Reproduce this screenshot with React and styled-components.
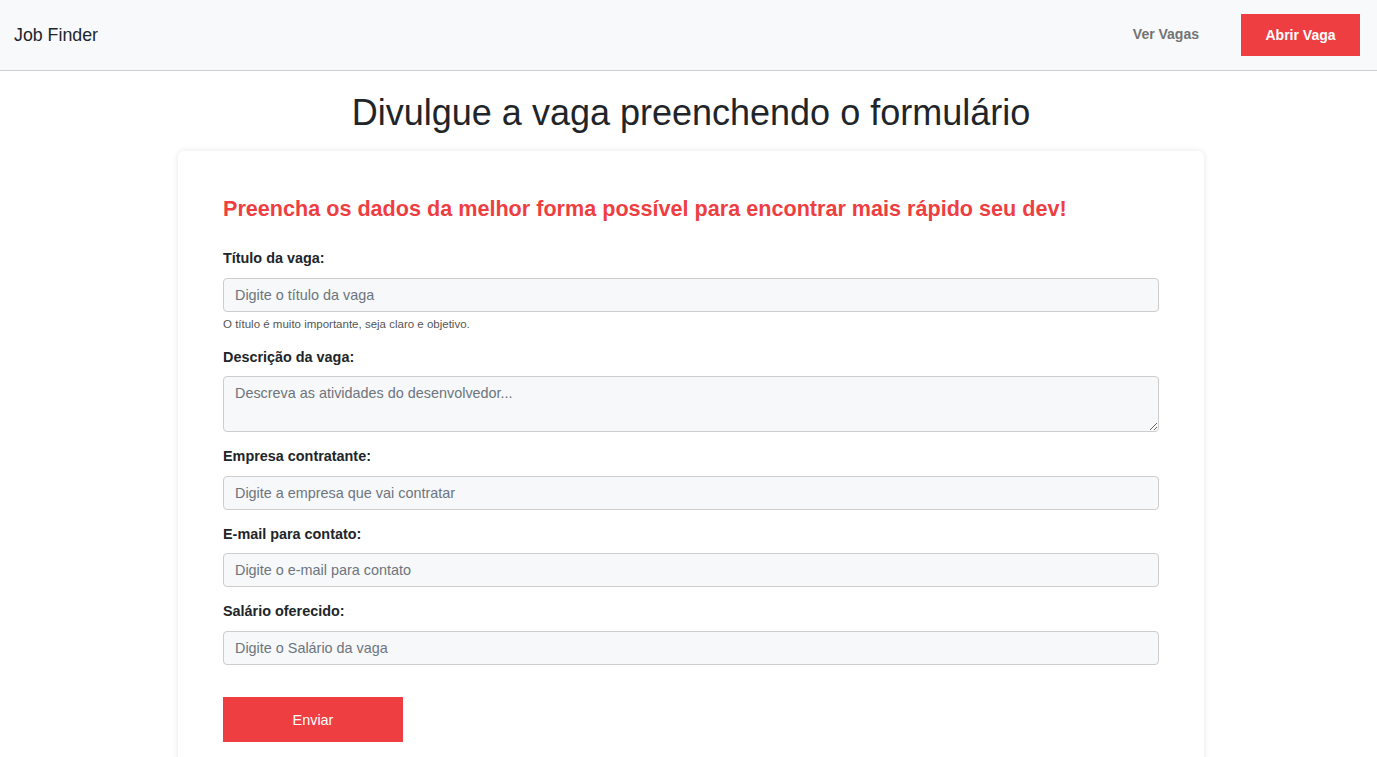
import React from "react";
import styled, { createGlobalStyle } from "styled-components";

const Global = createGlobalStyle`
  * { box-sizing: border-box; }
  html, body { margin: 0; padding: 0; background: #fff; }
  body { font-family: Arial, "Liberation Sans", Helvetica, sans-serif; color: #212529; overflow: hidden; }
`;

const Header = styled.header`
  height: 71px;
  background: #f8f9fa;
  border-bottom: 1px solid #cfcfcf;
  display: flex;
  align-items: center;
  justify-content: space-between;
  padding: 0 17px 0 14px;
`;

const Brand = styled.a`
  font-size: 17.8px;
  color: #212529;
  text-decoration: none;
`;

const Nav = styled.nav`
  display: flex;
  align-items: center;
  gap: 42px;
`;

const NavLink = styled.a`
  font-size: 14px;
  font-weight: bold;
  color: #737373;
  text-decoration: none;
  padding-bottom: 3px;
`;

const RedButton = styled.button`
  border: none;
  background: #ef3e42;
  color: #fff;
  font-family: inherit;
  font-size: ${(p) => p.$size || "14px"};
  font-weight: ${(p) => (p.$bold ? "bold" : "normal")};
  width: ${(p) => p.$w};
  height: ${(p) => p.$h};
  padding: 0;
  cursor: pointer;
`;

const Main = styled.main`
  padding-left: 5px;
`;

const Title = styled.h1`
  margin: 20px 0 17px;
  font-size: 36px;
  font-weight: normal;
  line-height: 1.2;
  text-align: center;
  color: #212529;
`;

const Card = styled.section`
  width: 1026px;
  margin: 0 auto;
  background: #fff;
  border-radius: 6px;
  box-shadow: 0 0 6px rgba(0, 0, 0, 0.1);
  padding: 45px 45px 60px;
`;

const CardHeading = styled.h2`
  margin: 0 0 26px;
  font-size: 21.6px;
  line-height: 1.2;
  font-weight: bold;
  color: #ef3e42;
`;

const Group = styled.div`
  margin-bottom: 14px;
  display: flex;
  flex-direction: column;
`;

const Label = styled.label`
  font-size: 14.4px;
  font-weight: bold;
  line-height: 21.6px;
  margin-bottom: 8px;
  color: #212529;
`;

const fieldStyles = `
  width: 936px;
  border: 1px solid #cdcdcd;
  border-radius: 4px;
  background: #f7f8fa;
  font-family: Arial, "Liberation Sans", sans-serif;
  font-size: 14.4px;
  color: #212529;
  padding: 0 11px;
  outline: none;
  &::placeholder { color: #6c757d; }
`;

const Input = styled.input`
  ${fieldStyles}
  height: 34px;
`;

const TextArea = styled.textarea`
  ${fieldStyles}
  height: 56px;
  padding-top: 6px;
  line-height: 21.6px;
  resize: vertical;
`;

const Help = styled.small`
  font-size: 11.5px;
  line-height: 17px;
  margin-top: 4px;
  color: #555;
`;

const Submit = styled.div`
  margin-top: 32px;
`;

const fields = [
  { id: "titulo", label: "Título da vaga:", ph: "Digite o título da vaga", help: "O título é muito importante, seja claro e objetivo." },
  { id: "descricao", label: "Descrição da vaga:", ph: "Descreva as atividades do desenvolvedor...", area: true },
  { id: "empresa", label: "Empresa contratante:", ph: "Digite a empresa que vai contratar" },
  { id: "email", label: "E-mail para contato:", ph: "Digite o e-mail para contato" },
  { id: "salario", label: "Salário oferecido:", ph: "Digite o Salário da vaga" },
];

export default function App() {
  return (
    <>
      <Global />
      <Header>
        <Brand href="#">Job Finder</Brand>
        <Nav>
          <NavLink href="#">Ver Vagas</NavLink>
          <RedButton $bold $w="119px" $h="42px">Abrir Vaga</RedButton>
        </Nav>
      </Header>
      <Main>
        <Title>Divulgue a vaga preenchendo o formulário</Title>
        <Card>
          <CardHeading>Preencha os dados da melhor forma possível para encontrar mais rápido seu dev!</CardHeading>
          <form onSubmit={(e) => e.preventDefault()}>
            {fields.map((f) => (
              <Group key={f.id}>
                <Label htmlFor={f.id}>{f.label}</Label>
                {f.area ? <TextArea id={f.id} placeholder={f.ph} /> : <Input id={f.id} placeholder={f.ph} />}
                {f.help && <Help>{f.help}</Help>}
              </Group>
            ))}
            <Submit>
              <RedButton type="submit" $size="14.4px" $w="180px" $h="45px">Enviar</RedButton>
            </Submit>
          </form>
        </Card>
      </Main>
    </>
  );
}
